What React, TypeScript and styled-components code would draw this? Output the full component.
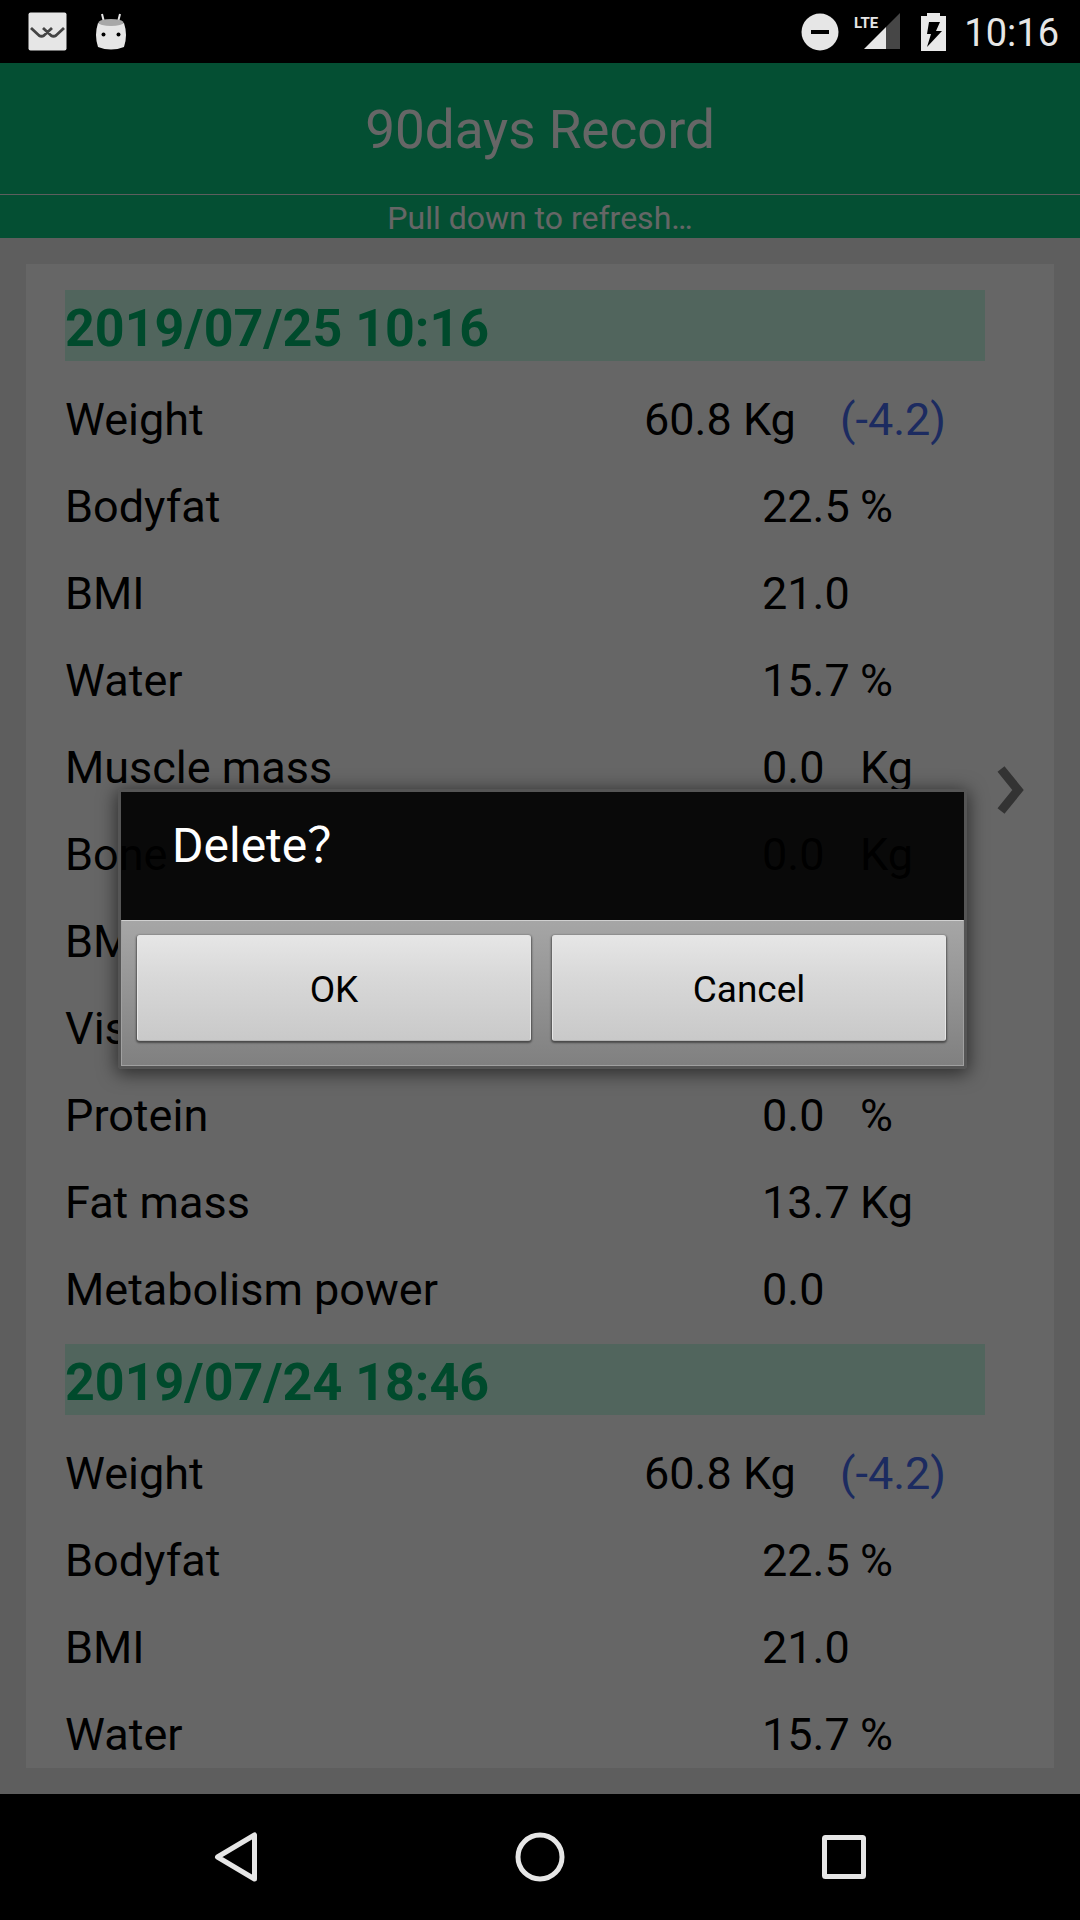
import React from "react";
import styled, { createGlobalStyle } from "styled-components";

const GlobalStyle = createGlobalStyle`
  * { box-sizing: border-box; }
  html, body, #root { height: 100%; }
  body { margin: 0; background: #000; font-family: Roboto, "Noto Sans CJK SC", sans-serif; }
  h1, h2, p, dl, dd, dt { margin: 0; font-weight: 400; }
`;

const Screen = styled.div`
  height: 100%;
  display: flex;
  flex-direction: column;
  overflow: hidden;
`;

const StatusBar = styled.header`
  flex: none;
  height: 63px;
  padding: 0 21px 0 28px;
  display: flex;
  align-items: center;
  justify-content: space-between;
  background: #000;
  color: #e6e6e6;
`;

const StatusGroup = styled.div<{ $gap: number }>`
  display: flex;
  align-items: center;
  gap: ${(p) => p.$gap}px;
`;

const Clock = styled.time`
  font-size: 38px;
  line-height: 44px;
  padding-top: 3px;
`;

const AppWindow = styled.div`
  position: relative;
  flex: 1;
  min-height: 0;
  display: flex;
  flex-direction: column;
  background: #ebebeb;
`;

const TitleBar = styled.div`
  flex: none;
  height: 132px;
  padding-top: 2px;
  display: flex;
  align-items: center;
  justify-content: center;
  background: #0ac680;
  border-bottom: 1px solid #ebebeb;
  color: #fff;
`;

const Title = styled.h1`
  font-size: 53px;
  line-height: 64px;
`;

const RefreshHint = styled.p`
  flex: none;
  height: 43px;
  background: #0ac680;
  color: #fff;
  text-align: center;
  font-size: 32px;
  line-height: 46px;
`;

const Content = styled.main`
  flex: 1;
  min-height: 0;
  padding: 26px;
  display: flex;
`;

const Card = styled.div`
  flex: 1;
  display: flex;
  background: #fff;
  overflow: hidden;
  padding: 0 26px 0 39px;
`;

const Records = styled.div`
  flex: 1;
  padding-top: 26px;
`;

const More = styled.button`
  flex: none;
  width: 43px;
  padding: 0 0 0 9px;
  border: 0;
  background: none;
  display: flex;
  align-items: center;
  justify-content: center;
  align-self: flex-start;
  height: 1052px;
`;

const DateHeading = styled.h2`
  height: 71px;
  margin-bottom: 15px;
  background: #cbfde8;
  color: #00ba6e;
  font-size: 52px;
  font-weight: 700;
  line-height: 77px;
`;

const Metrics = styled.dl`
  margin-bottom: 11px;
`;

const MetricRow = styled.div`
  display: flex;
  align-items: center;
  height: 87px;
  font-size: 45px;
  line-height: 53px;
  color: #000;
`;

const Name = styled.dt`
  flex: 1;
`;

const Reading = styled.dd<{ $wide?: boolean }>`
  flex: none;
  display: flex;
  width: ${(p) => (p.$wide ? 341 : 223)}px;
`;

const Value = styled.span`
  width: 98px;
`;

const Delta = styled.span`
  margin-left: auto;
  padding-right: 39px;
  color: #466bf0;
`;

const Scrim = styled.div`
  position: absolute;
  inset: 0;
  display: flex;
  align-items: center;
  justify-content: center;
  padding: 1px 113px 0 118px;
  background: rgba(0, 0, 0, 0.6);
`;

const Dialog = styled.section`
  width: 100%;
  border: 3px solid #555;
  border-radius: 4px;
  box-shadow: 0 3px 18px 2px rgba(0, 0, 0, 0.55);
`;

const DialogTitle = styled.h2`
  height: 128px;
  padding: 22px 51px;
  background: rgba(0, 0, 0, 0.91);
  color: #fff;
  font-size: 48px;
  line-height: 64px;
`;

const DialogActions = styled.div`
  display: flex;
  gap: 21px;
  padding: 14px 17px 24px 15px;
  border: 1px solid #a0a0a0;
  border-top: 1px solid #d0d0d0;
  background: linear-gradient(#a6a6a6, #808080);
`;

const DialogButton = styled.button`
  flex: 1;
  height: 106px;
  padding: 2px 0 0;
  border: 1px solid #e6e6e6;
  border-bottom-color: #b5b5b5;
  border-radius: 3px;
  background: linear-gradient(#e6e6e6, #d8d8d8 40%, #c9c9c9);
  box-shadow: 0 1px 2px 1px rgba(0, 0, 0, 0.45);
  color: #000;
  font-family: inherit;
  font-size: 37px;
`;

const NavBar = styled.nav`
  flex: none;
  height: 126px;
  display: flex;
  justify-content: center;
  gap: 176px;
  background: #000;
`;

const NavButton = styled.button`
  width: 128px;
  padding: 0;
  border: 0;
  background: none;
  display: flex;
  align-items: center;
  justify-content: center;
`;

type Metric = [name: string, value: string, unit: string];

const metrics: Metric[] = [
  ["Bodyfat", "22.5", "%"],
  ["BMI", "21.0", ""],
  ["Water", "15.7", "%"],
  ["Muscle mass", "0.0", "Kg"],
  ["Bone", "0.0", "Kg"],
  ["BMR", "0.0", ""],
  ["Visceral fat", "0.0", ""],
  ["Protein", "0.0", "%"],
  ["Fat mass", "13.7", "Kg"],
  ["Metabolism power", "0.0", ""],
];

function RecordBlock({ date, rows }: { date: string; rows: Metric[] }) {
  return (
    <article>
      <DateHeading>{date}</DateHeading>
      <Metrics>
        <MetricRow>
          <Name>Weight</Name>
          <Reading $wide>
            <span>60.8 Kg</span>
            <Delta>(-4.2)</Delta>
          </Reading>
        </MetricRow>
        {rows.map(([name, value, unit]) => (
          <MetricRow key={name}>
            <Name>{name}</Name>
            <Reading>
              <Value>{value}</Value>
              <span>{unit}</span>
            </Reading>
          </MetricRow>
        ))}
      </Metrics>
    </article>
  );
}

export default function App() {
  return (
    <Screen>
      <GlobalStyle />
      <StatusBar>
        <StatusGroup $gap={28}>
          <svg width="39" height="39" viewBox="0 0 39 39">
            <rect x="0.5" y="0.5" width="38" height="38" rx="2" fill="#e6e6e6" />
            <path
              d="M3 16l8 7.500q2.500 1.500 5 0l8-7.500M15 16l8 7.500q2.500 1.500 5 0l8-7.500"
              fill="none"
              stroke="#444"
              strokeWidth="2.8"
            />
          </svg>
          <svg width="32" height="38" viewBox="0 0 32 38">
            <path d="M7 1l2 8M25 1l-2 8" stroke="#e6e6e6" strokeWidth="2" />
            <path d="M3 10Q16 14 29 10Q33 22 29 34Q16 39 3 34Q-1 22 3 10z" fill="#e6e6e6" />
            <ellipse cx="16" cy="9.500" rx="12.500" ry="3.500" fill="#a8a8a8" />
            <circle cx="8.500" cy="21.500" r="2" fill="#000" />
            <circle cx="23.500" cy="21.500" r="2" fill="#000" />
          </svg>
        </StatusGroup>
        <StatusGroup $gap={18}>
          <svg width="103" height="40" viewBox="0 0 103 40">
            <circle cx="20" cy="20" r="18.500" fill="#e6e6e6" />
            <path d="M11 20h18" stroke="#000" strokeWidth="4" />
            <path d="M64 37L86 15V37z" fill="#e6e6e6" />
            <path d="M86 15L100 1V37H86z" fill="#464646" />
            <text x="54" y="16" fill="#e6e6e6" fontFamily="Roboto, sans-serif" fontWeight="700" fontSize="15">
              LTE
            </text>
          </svg>
          <svg width="25" height="38" viewBox="0 0 25 38">
            <path d="M6 0h13v3h6v35H0V3h6z" fill="#e9e9e9" />
            <path d="M8 9h11l-4 9h6L6 34l4-13H6z" fill="#000" />
          </svg>
          <Clock>10:16</Clock>
        </StatusGroup>
      </StatusBar>

      <AppWindow>
        <TitleBar>
          <Title>90days Record</Title>
        </TitleBar>
        <RefreshHint>Pull down to refresh…</RefreshHint>
        <Content>
          <Card>
            <Records>
              <RecordBlock date="2019/07/25 10:16" rows={metrics} />
              <RecordBlock date="2019/07/24 18:46" rows={metrics.slice(0, 3)} />
            </Records>
            <More aria-label="Record details">
              <svg width="28" height="50" viewBox="0 0 28 50">
                <path d="M4 4L21 25L4 46" fill="none" stroke="#808080" strokeWidth="9" />
              </svg>
            </More>
          </Card>
        </Content>

        <Scrim>
          <Dialog role="dialog" aria-labelledby="dialog-title">
            <DialogTitle id="dialog-title" lang="zh-CN">{"Delete\uFF1F"}</DialogTitle>
            <DialogActions>
              <DialogButton>OK</DialogButton>
              <DialogButton>Cancel</DialogButton>
            </DialogActions>
          </Dialog>
        </Scrim>
      </AppWindow>

      <NavBar>
        <NavButton aria-label="Back">
          <svg width="52" height="52" viewBox="0 0 52 52">
            <path d="M7.500 26L44.500 4V48z" fill="none" stroke="#e6e6e6" strokeWidth="5" strokeLinejoin="round" />
          </svg>
        </NavButton>
        <NavButton aria-label="Home">
          <svg width="52" height="52" viewBox="0 0 52 52">
            <circle cx="26" cy="26" r="22" fill="none" stroke="#e6e6e6" strokeWidth="5" />
          </svg>
        </NavButton>
        <NavButton aria-label="Recent apps">
          <svg width="52" height="52" viewBox="0 0 52 52">
            <rect x="6.500" y="6.500" width="39" height="39" rx="1" fill="none" stroke="#e6e6e6" strokeWidth="5" />
          </svg>
        </NavButton>
      </NavBar>
    </Screen>
  );
}
